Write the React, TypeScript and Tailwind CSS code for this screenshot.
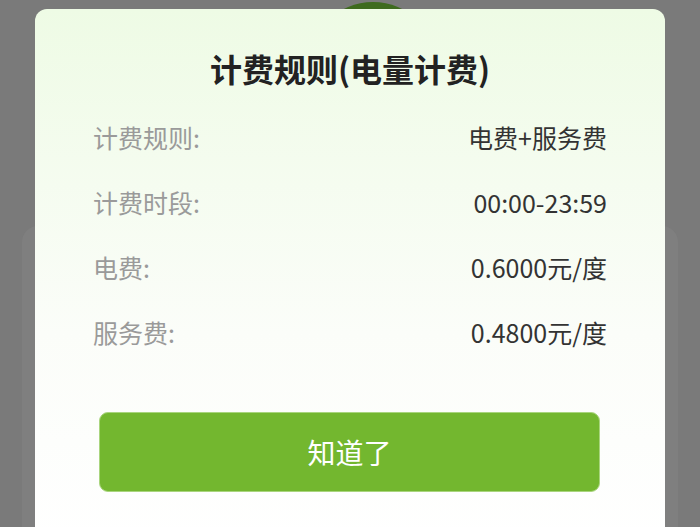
import React from "react";

const rows: [string, string][] = [
  ["计费规则:", "电费+服务费"],
  ["计费时段:", "00:00-23:59"],
  ["电费:", "0.6000元/度"],
  ["服务费:", "0.4800元/度"],
];

export default function App() {
  return (
    <div
      className="relative w-[700px] h-[527px] overflow-hidden bg-[#7a7a7a]"
      style={{ fontFamily: '"Noto Sans CJK SC", "Noto Sans", sans-serif' }}
    >
      {/* page behind the overlay */}
      <div className="flex flex-col items-center">
        <div className="ml-[46px] mt-[2px] w-[130px] h-[130px] shrink-0 rounded-full bg-[#3e6b1e]" />
        <div className="mt-[94px] w-[656px] h-[400px] rounded-[16px] bg-[#7f7f7f]" />
      </div>

      {/* modal */}
      <div className="absolute left-[35px] top-[9px] w-[630px] h-[540px] rounded-[12px] bg-gradient-to-b from-[#eefbe5] via-[#fbfdf9] via-60% to-white flex flex-col">
        <h1 className="pt-[38px] text-center text-[32px] leading-[42px] font-semibold text-[#222]">
          计费规则(电量计费)
        </h1>
        <div className="mt-[16px] px-[58px] flex flex-col">
          {rows.map(([k, v]) => (
            <div key={k} className="h-[65px] flex items-center justify-between text-[25px]">
              <span className="text-[#9a9a9a]">{k}</span>
              <span className="text-[#333]">{v}</span>
            </div>
          ))}
        </div>
        <div className="mt-[47px] pl-[64px] pr-[65px]">
          <button className="w-full h-[80px] rounded-[9px] bg-[#73b72f] border border-[#a9d57e] text-white text-[28px] flex items-center justify-center">
            知道了
          </button>
        </div>
      </div>
    </div>
  );
}
